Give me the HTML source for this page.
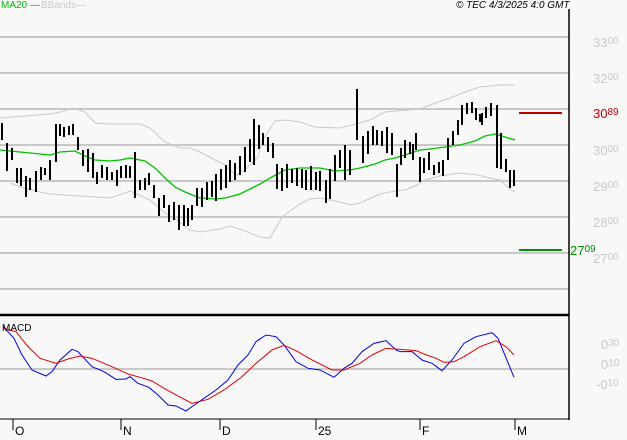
<!DOCTYPE html>
<html><head><meta charset="utf-8"><style>
html,body{margin:0;padding:0;background:#f8f8f8;}
body{width:627px;height:440px;overflow:hidden;position:relative;font-family:"Liberation Sans",sans-serif;}
.t{position:absolute;font-size:11px;line-height:11px;white-space:nowrap;}
.g{color:#c8c8c8;font-size:13px;}
.g small{font-size:10px;vertical-align:3px;}
</style></head><body>
<svg width="627" height="440" style="position:absolute;left:0;top:0" xmlns="http://www.w3.org/2000/svg">
<g stroke="#c8c8c8" stroke-width="2" fill="none">
<path d="M0 37H569M0 73H569M0 109H569M0 145H569M0 181H569M0 217H569M0 253H569M0 289H569M0 369H569"/>
</g>
<line x1="569" y1="9" x2="569" y2="420" stroke="#000" stroke-width="1.5"/>
<line x1="0" y1="315" x2="569" y2="315" stroke="#000" stroke-width="2.5"/>
<line x1="0" y1="419" x2="569" y2="419" stroke="#000" stroke-width="1"/>
<g stroke="#000" stroke-width="1">
<path d="M13 419V430M121 419V430M220 419V430M316 419V430M420 419V430M515 419V430"/>
</g>
<g fill="none" stroke="#c8c8c8" stroke-width="1">
<polyline points="0,118 50,114 60,112 73,108 85,112 95,123 110,124 140,124 150,128 165,142 180,148 190,148 200,152 215,160 225,165 230,170 236,175 245,170 258,157 262,141 275,121 285,120 300,122 315,127 340,128 352,125 370,120 385,112 420,109 430,105 450,98 465,92 480,87 490,86 500,85 515,85"/>
<polyline points="10,183 20,187 40,192 50,194 80,196 110,198 125,193 130,191 150,200 165,213 180,222 190,230 200,232 220,229 230,226 245,231 260,237 270,238 282,217 300,204 310,199 320,198 340,202 350,205 360,203 380,194 395,191 405,190 415,186 425,180 440,176 460,173 478,175 490,178 500,180 510,189 515,192"/>
</g>
<polyline fill="none" stroke="#00c000" stroke-width="1.3" points="0,150 10,151 30,153 50,155 60,152 75,151 85,156 95,160 110,161 120,160 130,158 145,161 155,168 165,178 175,187 185,192 200,198 215,199 225,198 240,194 250,189 260,184 270,178 285,170 300,168 320,168 335,171 350,170 360,168 375,164 385,160 395,158 405,155 420,150 430,149 445,147 460,145 475,141 485,136 495,134 505,137 515,140"/>
<g stroke="#000" stroke-width="2">
<path d="M2 123V140M7 143V171M12 148V160M17 168V183M21 168V186M26 176V197M30 178V190M36 171V192M41 167V180M45 168V175M50 160V180M56 124V162M60 124V136M64 127V137M69 126V135M73 124V135M78 137V150M83 150V166M88 149V172M93 153V178M97 172V184M102 165V178M107 167V180M112 172V180M117 170V186M121 166V178M126 165V178M130 166V178M135 152V198M140 180V190M145 178V190M149 173V185M154 185V198M159 198V216M164 195V208M169 205V222M174 202V220M179 205V230M184 205V226M188 208V226M192 205V220M197 188V206M202 188V207M207 182V200M212 181V197M216 174V201M221 169V190M226 165V188M230 160V182M235 163V180M240 156V175M245 147V172M250 139V162M254 119V165M259 125V149M263 133V145M268 137V152M273 143V158M277 164V189M282 168V191M287 164V188M292 169V183M297 168V186M302 169V188M306 170V190M311 166V190M316 172V190M320 171V191M326 180V203M330 169V199M335 155V181M340 150V168M345 145V180M350 150V175M357 89V140M363 136V163M368 131V154M373 126V145M377 130V145M382 131V146M387 127V153M392 133V155M397 164V197M401 148V165M405 140V158M410 142V154M413 144V160M416 133V150M420 157V182M424 158V173M429 152V170M434 165V175M439 162V173M443 160V176M448 138V160M453 131V145M458 120V135M462 105V125M467 103V114M472 102V113M476 108V120M480 114V122M482 113V125M486 107V118M491 103V116M497 105V168M501 133V169M506 159V172M510 170V188M514 170V186"/>
</g>
<line x1="519" y1="113" x2="562" y2="113" stroke="#c00000" stroke-width="2"/>
<line x1="519" y1="250" x2="562" y2="250" stroke="#009000" stroke-width="2"/>
<g transform="translate(0,300) scale(0.4,0.3333)" fill="none" stroke-width="1">
<polyline vector-effect="non-scaling-stroke" stroke="#0000e0" points="8,80 35,115 55,165 80,210 115,228 130,215 150,180 180,148 195,155 230,200 260,215 290,238 315,237 325,230 345,250 372,262 395,285 420,315 440,318 465,333 480,320 510,295 540,270 570,240 595,195 620,165 640,125 665,105 690,110 710,135 740,185 770,205 800,210 835,232 860,205 880,190 905,155 935,130 965,122 990,150 1000,155 1030,155 1055,180 1080,190 1105,212 1130,180 1160,130 1190,110 1230,98 1245,115 1285,232"/>
<polyline vector-effect="non-scaling-stroke" stroke="#e00000" points="8,85 40,95 70,140 100,175 140,190 170,177 200,168 230,175 280,200 320,222 350,232 380,243 410,265 440,285 480,310 520,298 560,270 600,235 640,190 680,150 710,136 740,152 780,180 830,210 860,210 900,190 930,165 965,145 1000,148 1040,152 1060,162 1090,175 1110,187 1135,185 1160,170 1200,140 1240,122 1265,140 1285,165"/>
</g>
</svg>
<div class="t" style="left:1px;top:0px;color:#00c000;font-size:10px">MA20 —</div>
<div class="t" style="left:41px;top:0px;color:#c8c8c8;font-size:10px">BBands—</div>
<div class="t" style="left:456px;top:0px;font-style:italic;font-size:10px;color:#000">© TEC 4/3/2025 4:0 GMT</div>
<div class="t g" style="left:593px;top:36px">33<small>00</small></div>
<div class="t g" style="left:593px;top:72px">32<small>00</small></div>
<div class="t g" style="left:593px;top:144px">30<small>00</small></div>
<div class="t g" style="left:593px;top:180px">29<small>00</small></div>
<div class="t g" style="left:593px;top:216px">28<small>00</small></div>
<div class="t g" style="left:593px;top:252px">27<small>00</small></div>
<div class="t g" style="left:593px;top:107px;color:#c00000;background:#f8f8f8">30<small>89</small></div>
<div class="t g" style="left:570px;top:244px;color:#009000">27<small>09</small></div>
<div class="t g" style="left:601px;top:338px">0<small>30</small></div>
<div class="t g" style="left:601px;top:358px">0<small>10</small></div>
<div class="t g" style="left:596px;top:378px">-0<small>10</small></div>
<div class="t" style="left:2px;top:323px;font-size:10px;color:#000">MACD</div>
<div class="t" style="left:15px;top:426px;font-size:12px">O</div>
<div class="t" style="left:123px;top:426px;font-size:12px">N</div>
<div class="t" style="left:222px;top:426px;font-size:12px">D</div>
<div class="t" style="left:318px;top:426px;font-size:12px">25</div>
<div class="t" style="left:422px;top:426px;font-size:12px">F</div>
<div class="t" style="left:517px;top:426px;font-size:12px">M</div>
</body></html>
